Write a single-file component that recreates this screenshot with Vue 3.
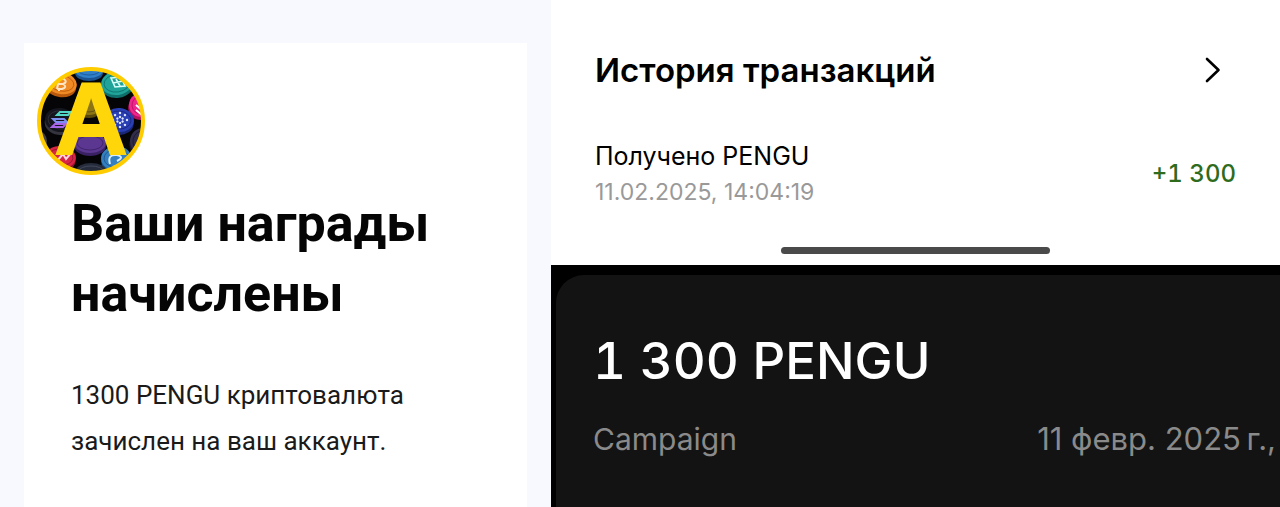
<template>
  <div class="page">
    <section class="mail">
      <article class="letter">
        <svg class="logo" viewBox="0 0 108 108" role="img" aria-label="A">
          <defs>
            <clipPath id="disc">
              <circle cx="54" cy="54" r="51" />
            </clipPath>
          </defs>
          <g clip-path="url(#disc)">
            <rect width="108" height="108" fill="#050507" />
            <g v-for="coin in coins" :key="coin.id" :transform="`translate(${coin.x} ${coin.y}) rotate(${coin.turn})`">
              <ellipse cy="3" :rx="coin.rx" :ry="coin.ry" :fill="coin.edge" />
              <ellipse :rx="coin.rx" :ry="coin.ry" :fill="coin.face" />
              <ellipse :rx="coin.rx - 3" :ry="coin.ry - 3" fill="none" :stroke="coin.edge" stroke-width="0.8" />
            </g>
            <!-- coin signs -->
            <g fill="none" stroke="#fff" stroke-width="2">
              <path d="M22 12l-2 10M22 12h5q4 3-1 5h-5M26 17q5 3-1 5h-5M24 10v2M22 22v2" stroke="#ffe6c4" />
              <path d="M74 11l10-1 4 9-10 1zM79 12l4 7M76 16l10-2" stroke="#d8fffa" stroke-width="1.6" />
              <path d="M20 48l3-3h11l-3 3z" stroke="#52d5c5" />
              <path d="M16 52h11l3 3H19z" stroke="#7d8ff0" />
              <path d="M15 60l3-3h11l-3 3z" stroke="#a965e8" />
              <path d="M20 94l6-7 3 5 5-6" stroke="#ffd5dc" />
              <path d="M73 97q-3-10 7-9 8 2 0 6M76 100q7-1 10-6" stroke="#d5edff" />
              <path d="M99 38l7 6M99 43l6 5" />
            </g>
            <g fill="#dfe6ff">
              <circle v-for="n in 8" :key="n" cx="83" cy="46" r="1.2" :transform="`rotate(${n * 45} 83 53)`" />
              <circle v-for="n in 6" :key="n" cx="83" cy="50" r="1.2" :transform="`rotate(${n * 60} 83 53)`" />
            </g>
          </g>
          <circle cx="54" cy="54" r="52" fill="none" stroke="#fc0" stroke-width="4" />
          <text class="logo-letter" x="54" y="87" text-anchor="middle">A</text>
        </svg>
        <div class="letter-text">
          <h1>Ваши награды начислены</h1>
          <p>1300 PENGU криптовалюта зачислен на ваш аккаунт.</p>
        </div>
      </article>
    </section>

    <div class="wallet">
      <section class="history">
        <header class="history-head">
          <h2>История транзакций</h2>
          <button type="button" class="more" aria-label="История транзакций">
            <svg viewBox="0 0 16 26" aria-hidden="true">
              <path d="M2 2l11.5 11L2 24" />
            </svg>
          </button>
        </header>
        <div class="transaction">
          <div>
            <div class="name">Получено PENGU</div>
            <time class="date" datetime="2025-02-11T14:04:19">11.02.2025, 14:04:19</time>
          </div>
          <div class="plus">+1 300</div>
        </div>
        <div class="home-bar"></div>
      </section>

      <section class="reward">
        <div class="reward-card">
          <div class="amount">1 300 PENGU</div>
          <div class="reward-row">
            <span>Campaign</span>
            <time class="reward-date" datetime="2025-02-11">11 февр. 2025&#8239;г.,</time>
          </div>
        </div>
      </section>
    </div>
  </div>
</template>

<script setup>
const coins = [
  { id: "btc", x: 24, y: 16, rx: 16, ry: 11, turn: 12, face: "#f08a24", edge: "#b9590c" },
  { id: "top", x: 52, y: 3, rx: 14, ry: 8, turn: 0, face: "#2f7fc9", edge: "#1b5391" },
  { id: "teal", x: 80, y: 16, rx: 16, ry: 12, turn: -8, face: "#20a399", edge: "#0f6f6a" },
  { id: "gold", x: 52, y: 36, rx: 14, ry: 12, turn: 0, face: "#8a7414", edge: "#57480a" },
  { id: "pink", x: 104, y: 38, rx: 12, ry: 12, turn: 15, face: "#f0268f", edge: "#b3105f" },
  { id: "sol", x: 23, y: 53, rx: 15, ry: 12, turn: 8, face: "#15151f", edge: "#34343f" },
  { id: "ada", x: 82, y: 53, rx: 15, ry: 12, turn: 5, face: "#2a3fb4", edge: "#1a2678" },
  { id: "violet", x: 53, y: 76, rx: 16, ry: 10, turn: 0, face: "#5b3791", edge: "#3a2163" },
  { id: "left", x: 1, y: 74, rx: 9, ry: 10, turn: 0, face: "#45404c", edge: "#292630" },
  { id: "right", x: 105, y: 74, rx: 12, ry: 13, turn: 10, face: "#302c49", edge: "#1c1930" },
  { id: "red", x: 24, y: 90, rx: 15, ry: 11, turn: 8, face: "#d92545", edge: "#8f1230" },
  { id: "blue", x: 79, y: 91, rx: 15, ry: 12, turn: -5, face: "#347fc0", edge: "#1c5288" },
  { id: "bottom", x: 54, y: 104, rx: 15, ry: 8, turn: 0, face: "#262c3c", edge: "#4b5163" },
];
</script>

<style>
body {
  margin: 0;
}
</style>

<style scoped>
.page {
  display: grid;
  grid-template-columns: 551fr 729fr;
  min-height: 100vh;
  font-family: Inter, "Liberation Sans", sans-serif;
}

h1,
h2,
p {
  margin: 0;
}

.mail {
  display: flex;
  box-sizing: border-box;
  padding: 43px 24px 0;
  background: #f8f9fe;
  font-family: Roboto, "Liberation Sans", sans-serif;
}

.letter {
  flex: 1;
  padding: 24px 13px 0;
  background: #fff;
}

.logo {
  display: block;
  width: 108px;
  height: 108px;
  overflow: visible;
}

.logo-letter {
  font: bold 102px "Liberation Sans", sans-serif;
  fill: #ffd60a;
  stroke: #ffd60a;
  stroke-width: 2px;
}

.letter-text {
  padding: 14px 34px 0;
  color: #050505;
}

h1 {
  font-size: 52px;
  line-height: 70px;
  font-weight: 700;
}

p {
  margin-top: 43px;
  font-size: 26px;
  line-height: 46px;
  color: #1a1a1a;
}

.wallet {
  display: flex;
  flex-direction: column;
  min-width: 0;
}

.history {
  padding: 50px 44px 11px;
  background: #fff;
}

.history-head {
  display: flex;
  align-items: center;
  justify-content: space-between;
}

h2 {
  font-size: 33px;
  line-height: 40px;
  font-weight: 600;
}

.more {
  display: flex;
  padding: 0 15px;
  border: 0;
  background: none;
  cursor: pointer;
}

.more svg {
  width: 16px;
  height: 26px;
  fill: none;
  stroke: #000;
  stroke-width: 2.6;
  stroke-linecap: round;
  stroke-linejoin: round;
}

.transaction {
  display: flex;
  align-items: center;
  justify-content: space-between;
  margin-top: 50px;
}

.name {
  font-size: 25px;
  line-height: 32px;
}

.date {
  display: block;
  margin-top: 4px;
  font-size: 23px;
  line-height: 32px;
  color: #999;
}

.plus {
  font-size: 24px;
  line-height: 32px;
  font-weight: 500;
  color: #2e6b1c;
}

.plus,
.amount {
  font-variant-numeric: tabular-nums;
}

.home-bar {
  width: 37vw;
  max-width: 42%;
  height: 7px;
  margin: 39px auto 0;
  border-radius: 4px;
  background: #4a4a4a;
}

.reward {
  display: flex;
  flex: 1;
  padding: 10px 0 0 5px;
  background: #000;
}

.reward-card {
  flex: 1;
  min-width: 0;
  padding: 54px 4px 0 37px;
  border-top-left-radius: 28px;
  background: #131313;
}

.amount {
  font-size: 51px;
  line-height: 64px;
  font-weight: 500;
  color: #fff;
}

.reward-row {
  display: flex;
  align-items: baseline;
  justify-content: space-between;
  margin-top: 26px;
  font-size: 30px;
  line-height: 40px;
  color: #8a8a8a;
  white-space: nowrap;
}

.reward-date {
  font-size: 31px;
}
</style>
